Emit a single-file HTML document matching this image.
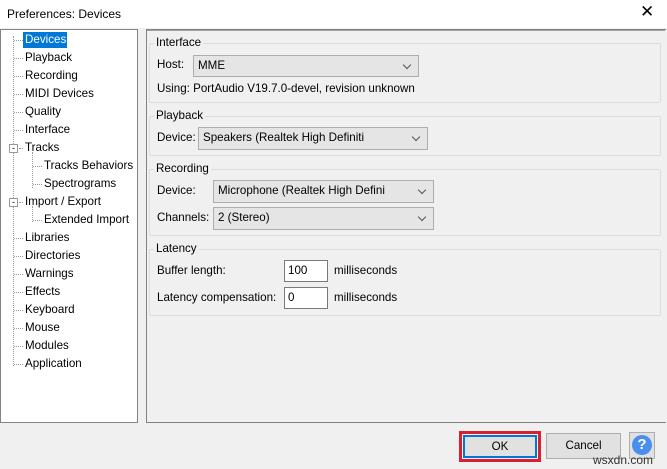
<!DOCTYPE html><html><head><style>
*{margin:0;padding:0;box-sizing:border-box}
body{width:667px;height:469px;background:#f0f0f0;font-family:"Liberation Sans",sans-serif;font-size:11.6px;color:#000;position:relative;overflow:hidden}
.a{position:absolute;white-space:nowrap}
.grp{position:absolute;border:1px solid #dcdcdc;border-radius:2px}
.lg{position:absolute;background:#f0f0f0;padding:0 2px;top:-8px;left:4px}
.sel{position:absolute;background:#e5e5e5;border:1px solid #adadad;padding:3px 4px;line-height:14px}
.sel:after{content:"";position:absolute;right:8px;top:6px;width:5px;height:5px;border-right:1px solid #555;border-bottom:1px solid #555;transform:rotate(45deg)}
.inp{position:absolute;background:#fff;border:1px solid #7a7a7a;padding:3px 3px;line-height:14px}
.tr{position:absolute;left:25px;line-height:18px}
.dot{position:absolute;border-top:1px dotted #999;width:9px;height:0}
</style></head><body>
<div class="a" style="left:0;top:0;width:667px;height:28px;background:#fff"></div>
<div class="a" style="left:7px;top:7px;font-size:12px">Preferences: Devices</div>
<div class="a" style="left:640px;top:2px;font-size:17px">✕</div>
<div class="a" style="left:0;top:29px;width:138px;height:394px;background:#fff;border:1px solid #828282"></div>
<div class="a" style="left:13px;top:36px;height:330px;border-left:1px dotted #999"></div>
<div class="a" style="left:32px;top:152px;height:36px;border-left:1px dotted #999"></div>
<div class="a" style="left:32px;top:206px;height:16px;border-left:1px dotted #999"></div>
<div class="dot" style="left:14px;top:40px"></div>
<div class="dot" style="left:14px;top:58px"></div>
<div class="dot" style="left:14px;top:76px"></div>
<div class="dot" style="left:14px;top:94px"></div>
<div class="dot" style="left:14px;top:112px"></div>
<div class="dot" style="left:14px;top:130px"></div>
<div class="dot" style="left:19px;top:148px;width:4px"></div>
<div class="dot" style="left:33px;top:166px"></div>
<div class="dot" style="left:33px;top:184px"></div>
<div class="dot" style="left:19px;top:202px;width:4px"></div>
<div class="dot" style="left:33px;top:220px"></div>
<div class="dot" style="left:14px;top:238px"></div>
<div class="dot" style="left:14px;top:256px"></div>
<div class="dot" style="left:14px;top:274px"></div>
<div class="dot" style="left:14px;top:292px"></div>
<div class="dot" style="left:14px;top:310px"></div>
<div class="dot" style="left:14px;top:328px"></div>
<div class="dot" style="left:14px;top:346px"></div>
<div class="dot" style="left:14px;top:364px"></div>
<div class="a" style="left:23px;top:32px;width:44px;height:16px;background:#0078d7"></div>
<div class="tr" style="top:31px;color:#fff">Devices</div>
<div class="tr" style="top:49px">Playback</div>
<div class="tr" style="top:67px">Recording</div>
<div class="tr" style="top:85px">MIDI Devices</div>
<div class="tr" style="top:103px">Quality</div>
<div class="tr" style="top:121px">Interface</div>
<div class="tr" style="top:139px">Tracks</div>
<div class="tr" style="top:157px;left:44px">Tracks Behaviors</div>
<div class="tr" style="top:175px;left:44px">Spectrograms</div>
<div class="tr" style="top:193px">Import / Export</div>
<div class="tr" style="top:211px;left:44px">Extended Import</div>
<div class="tr" style="top:229px">Libraries</div>
<div class="tr" style="top:247px">Directories</div>
<div class="tr" style="top:265px">Warnings</div>
<div class="tr" style="top:283px">Effects</div>
<div class="tr" style="top:301px">Keyboard</div>
<div class="tr" style="top:319px">Mouse</div>
<div class="tr" style="top:337px">Modules</div>
<div class="tr" style="top:355px">Application</div>
<div class="a" style="left:9px;top:144px;width:9px;height:9px;border:1px solid #999;background:#fff;font-size:9px;line-height:6px;text-align:center">-</div>
<div class="a" style="left:9px;top:198px;width:9px;height:9px;border:1px solid #999;background:#fff;font-size:9px;line-height:6px;text-align:center">-</div>
<div class="a" style="left:146px;top:29px;width:520px;height:394px;border:1px solid #828282;border-right:none"></div>
<div class="a" style="left:147px;top:30px;width:518px;height:1px;background:#a0a0a0"></div>
<div class="grp" style="left:149px;top:43px;width:512px;height:60px"><span class="lg">Interface</span></div>
<div class="a" style="left:157px;top:58px">Host:</div>
<div class="sel" style="left:193px;top:55px;width:226px;height:22px">MME</div>
<div class="a" style="left:157px;top:82px">Using: PortAudio V19.7.0-devel, revision unknown</div>
<div class="grp" style="left:149px;top:116px;width:512px;height:40px"><span class="lg">Playback</span></div>
<div class="a" style="left:157px;top:131px">Device:</div>
<div class="sel" style="left:198px;top:127px;width:230px;height:23px">Speakers (Realtek High Definiti</div>
<div class="grp" style="left:149px;top:169px;width:512px;height:67px"><span class="lg">Recording</span></div>
<div class="a" style="left:157px;top:184px">Device:</div>
<div class="sel" style="left:213px;top:180px;width:221px;height:23px">Microphone (Realtek High Defini</div>
<div class="a" style="left:157px;top:211px">Channels:</div>
<div class="sel" style="left:213px;top:207px;width:221px;height:23px">2 (Stereo)</div>
<div class="grp" style="left:149px;top:249px;width:512px;height:67px"><span class="lg">Latency</span></div>
<div class="a" style="left:157px;top:264px">Buffer length:</div>
<div class="inp" style="left:284px;top:260px;width:44px;height:22px">100</div>
<div class="a" style="left:334px;top:264px">milliseconds</div>
<div class="a" style="left:157px;top:291px">Latency compensation:</div>
<div class="inp" style="left:284px;top:287px;width:44px;height:22px">0</div>
<div class="a" style="left:334px;top:291px">milliseconds</div>
<div class="a" style="left:459px;top:431px;width:82px;height:31px;border:3px solid #d9202c"></div>
<div class="a" style="left:463px;top:435px;width:74px;height:23px;background:#e1e1e1;border:2px solid #0078d7;text-align:center;line-height:19px">OK</div>
<div class="a" style="left:546px;top:433px;width:75px;height:26px;background:#e1e1e1;border:1px solid #adadad;text-align:center;line-height:24px">Cancel</div>
<div class="a" style="left:629px;top:432px;width:26px;height:27px;background:#e1e1e1;border:1px solid #adadad"></div>
<div class="a" style="left:632px;top:435px;width:20px;height:20px;border-radius:50%;background:#4a8ef0;color:#fff;font-weight:bold;font-size:15px;text-align:center;line-height:20px">?</div>
<div class="a" style="left:593px;top:453px;color:#333;font-size:12px">wsxdn.com</div>
</body></html>
